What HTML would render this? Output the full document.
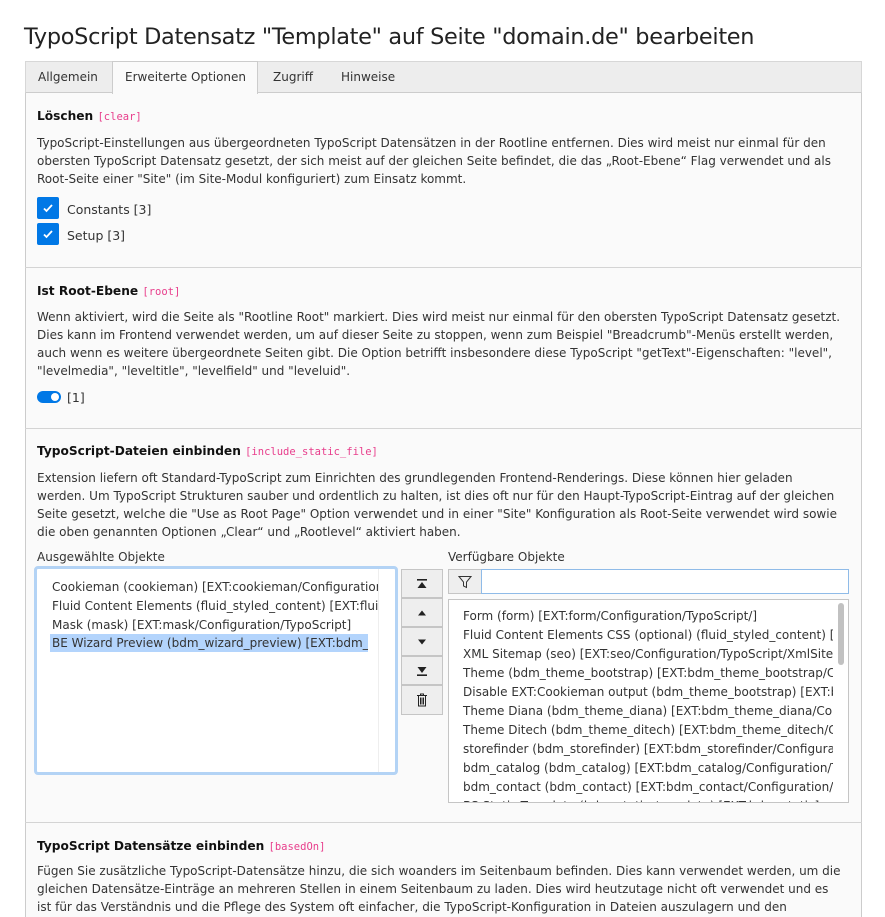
<!DOCTYPE html>
<html style="height:917px;overflow:hidden"><head><meta charset="utf-8"><style>
*{box-sizing:border-box;margin:0;padding:0}
body{width:885px;height:917px;overflow:hidden;background:#fff;font-family:"DejaVu Sans",Verdana,sans-serif;font-size:12px;color:#333;position:relative}
.a{position:absolute;white-space:nowrap}
h1{position:absolute;left:24px;top:24px;font-size:22.4px;font-weight:normal;color:#222;font-family:"DejaVu Sans",sans-serif;letter-spacing:-0.3px}
.tabs{position:absolute;left:25px;top:61px;width:837px;height:32px;background:#ededed;border:1px solid #d7d7d7;border-bottom:1px solid #ccc}
.tab{position:absolute;top:0;height:31px;line-height:30px;font-size:12px;color:#333}
.panel{position:absolute;left:25px;top:92px;width:837px;height:840px;background:#fafafa;border:1px solid #ccc}
.sep{position:absolute;left:25px;width:837px;height:1px;background:#d4d4d4}
.h{font-weight:bold;font-size:12.2px;color:#111}
.c{font-family:"DejaVu Sans Mono",monospace;font-weight:normal;font-size:10.5px;color:#e83e8c}
.p{line-height:18px}
.cb{position:absolute;left:37px;width:22px;height:22px;background:#0078e6;border-radius:2px}
.cb svg{position:absolute;left:5px;top:5px}
.btn{position:absolute;left:401px;width:42px;height:29px;background:#eee;border:1px solid #c5c5c5;display:flex;align-items:center;justify-content:center}
.li{position:absolute;left:0;height:18px;line-height:18px;white-space:nowrap}
</style></head><body>
<h1>TypoScript Datensatz "Template" auf Seite "domain.de" bearbeiten</h1>
<div class="panel"></div>
<div class="tabs">
<div class="tab" style="left:12px">Allgemein</div>
<div class="tab" style="left:86px;width:146px;top:-1px;height:33px;background:#fafafa;border:1px solid #ccc;border-bottom:none;padding-left:12px">Erweiterte Optionen</div>
<div class="tab" style="left:247px">Zugriff</div>
<div class="tab" style="left:315px">Hinweise</div>
</div>

<div class="a h" style="left:37px;top:109px">Löschen <span class="c">[clear]</span></div>
<div class="a p" style="left:37px;top:134px">TypoScript-Einstellungen aus übergeordneten TypoScript Datensätzen in der Rootline entfernen. Dies wird meist nur einmal für den<br>obersten TypoScript Datensatz gesetzt, der sich meist auf der gleichen Seite befindet, die das „Root-Ebene“ Flag verwendet und als<br>Root-Seite einer "Site" (im Site-Modul konfiguriert) zum Einsatz kommt.</div>
<div class="cb" style="top:197px"><svg width="12" height="12" viewBox="0 0 12 12"><path d="M2 6.5l2.5 2.5 5.5-6" stroke="#fff" stroke-width="1.8" fill="none"/></svg></div>
<div class="a" style="left:67px;top:202px;font-size:12.5px">Constants [3]</div>
<div class="cb" style="top:223px"><svg width="12" height="12" viewBox="0 0 12 12"><path d="M2 6.5l2.5 2.5 5.5-6" stroke="#fff" stroke-width="1.8" fill="none"/></svg></div>
<div class="a" style="left:67px;top:228px;font-size:12.5px">Setup [3]</div>
<div class="sep" style="top:267px"></div>

<div class="a h" style="left:37px;top:284px">Ist Root-Ebene <span class="c">[root]</span></div>
<div class="a p" style="left:37px;top:308px">Wenn aktiviert, wird die Seite als "Rootline Root" markiert. Dies wird meist nur einmal für den obersten TypoScript Datensatz gesetzt.<br>Dies kann im Frontend verwendet werden, um auf dieser Seite zu stoppen, wenn zum Beispiel "Breadcrumb"-Menüs erstellt werden,<br>auch wenn es weitere übergeordnete Seiten gibt. Die Option betrifft insbesondere diese TypoScript "getText"-Eigenschaften: "level",<br>"levelmedia", "leveltitle", "levelfield" und "leveluid".</div>
<div class="a" style="left:37px;top:391px;width:24px;height:12px;border-radius:6px;background:#0078e6"><div style="position:absolute;right:2px;top:2px;width:8px;height:8px;border-radius:50%;background:#fff"></div></div>
<div class="a" style="left:67px;top:390px;font-size:12.5px">[1]</div>
<div class="sep" style="top:428px"></div>

<div class="a h" style="left:37px;top:444px">TypoScript-Dateien einbinden <span class="c">[include_static_file]</span></div>
<div class="a p" style="left:37px;top:469px">Extension liefern oft Standard-TypoScript zum Einrichten des grundlegenden Frontend-Renderings. Diese können hier geladen<br>werden. Um TypoScript Strukturen sauber und ordentlich zu halten, ist dies oft nur für den Haupt-TypoScript-Eintrag auf der gleichen<br>Seite gesetzt, welche die "Use as Root Page" Option verwendet und in einer "Site" Konfiguration als Root-Seite verwendet wird sowie<br>die oben genannten Optionen „Clear“ und „Rootlevel“ aktiviert haben.</div>
<div class="a" style="left:37px;top:550px">Ausgewählte Objekte</div>
<div class="a" style="left:34px;top:566px;width:364px;height:209px;border:3px solid #b3d3f5;border-radius:4px;background:#fff;overflow:hidden">
<div style="position:absolute;left:0;top:0;width:342px;height:203px;border-right:1px solid #eee;overflow:hidden">
<div class="li" style="left:15px;top:9px">Cookieman (cookieman) [EXT:cookieman/Configuration/TypoScript]</div>
<div class="li" style="left:15px;top:28px">Fluid Content Elements (fluid_styled_content) [EXT:fluid_styled_content]</div>
<div class="li" style="left:15px;top:47px">Mask (mask) [EXT:mask/Configuration/TypoScript]</div>
<div class="li" style="left:13px;top:65px;width:318px;background:#b3d4fc;padding-left:2px;overflow:hidden">BE Wizard Preview (bdm_wizard_preview) [EXT:bdm_wizard_preview]</div>
</div></div>
<div class="btn" style="top:569px"><svg width="12" height="12"><rect x="1" y="1" width="10" height="1.6" fill="#222"/><path d="M1.5 10L6 4l4.5 6z" fill="#222"/></svg></div>
<div class="btn" style="top:598px"><svg width="12" height="12"><path d="M2 8.5L6 3.5l4 5z" fill="#222"/></svg></div>
<div class="btn" style="top:627px"><svg width="12" height="12"><path d="M2 3.5L6 8.5l4-5z" fill="#222"/></svg></div>
<div class="btn" style="top:656px"><svg width="12" height="12"><path d="M1.5 2L6 8l4.5-6z" fill="#222"/><rect x="1" y="9.4" width="10" height="1.6" fill="#222"/></svg></div>
<div class="btn" style="top:685px;height:30px"><svg width="12" height="14"><path d="M1 2.5h10M4.5 2.5V1h3v1.5M2.5 2.5v10.5h7V2.5M4.5 4.5v7M6 4.5v7M7.5 4.5v7" stroke="#222" stroke-width="1" fill="none"/></svg></div>

<div class="a" style="left:448px;top:550px">Verfügbare Objekte</div>
<div class="a" style="left:448px;top:569px;width:34px;height:25px;background:#eee;border:1px solid #c5c5c5"><svg width="14" height="14" style="position:absolute;left:9px;top:5px"><path d="M1 1.5h12L8.5 7v5.5L5.5 11V7z" stroke="#333" fill="none"/></svg></div>
<div class="a" style="left:481px;top:569px;width:368px;height:25px;background:#fff;border:1px solid #8fbbe8"></div>
<div class="a" style="left:448px;top:599px;width:401px;height:204px;background:#fff;border:1px solid #c5c5c5;overflow:hidden">
<div style="position:absolute;left:0;top:0;width:384px;height:204px;overflow:hidden">
<div class="li" style="left:14px;top:7px">Form (form) [EXT:form/Configuration/TypoScript/]</div>
<div class="li" style="left:14px;top:26px">Fluid Content Elements CSS (optional) (fluid_styled_content) [EXT]</div>
<div class="li" style="left:14px;top:45px">XML Sitemap (seo) [EXT:seo/Configuration/TypoScript/XmlSitemap]</div>
<div class="li" style="left:14px;top:64px">Theme (bdm_theme_bootstrap) [EXT:bdm_theme_bootstrap/Config]</div>
<div class="li" style="left:14px;top:83px">Disable EXT:Cookieman output (bdm_theme_bootstrap) [EXT:bdm]</div>
<div class="li" style="left:14px;top:102px">Theme Diana (bdm_theme_diana) [EXT:bdm_theme_diana/Config]</div>
<div class="li" style="left:14px;top:121px">Theme Ditech (bdm_theme_ditech) [EXT:bdm_theme_ditech/Config]</div>
<div class="li" style="left:14px;top:140px">storefinder (bdm_storefinder) [EXT:bdm_storefinder/Configuration]</div>
<div class="li" style="left:14px;top:159px">bdm_catalog (bdm_catalog) [EXT:bdm_catalog/Configuration/Typo]</div>
<div class="li" style="left:14px;top:178px">bdm_contact (bdm_contact) [EXT:bdm_contact/Configuration/Typo]</div>
<div class="li" style="left:14px;top:197px">BS Static Template (bdm_static_template) [EXT:bdm_static]</div>
</div>
<div style="position:absolute;left:389px;top:3px;width:6px;height:62px;border-radius:3px;background:#c1c1c1"></div>
</div>
<div class="sep" style="top:822px"></div>

<div class="a h" style="left:37px;top:839px">TypoScript Datensätze einbinden <span class="c">[basedOn]</span></div>
<div class="a p" style="left:37px;top:862px">Fügen Sie zusätzliche TypoScript-Datensätze hinzu, die sich woanders im Seitenbaum befinden. Dies kann verwendet werden, um die<br>gleichen Datensätze-Einträge an mehreren Stellen in einem Seitenbaum zu laden. Dies wird heutzutage nicht oft verwendet und es<br>ist für das Verständnis und die Pflege des System oft einfacher, die TypoScript-Konfiguration in Dateien auszulagern und den</div>
</body></html>
